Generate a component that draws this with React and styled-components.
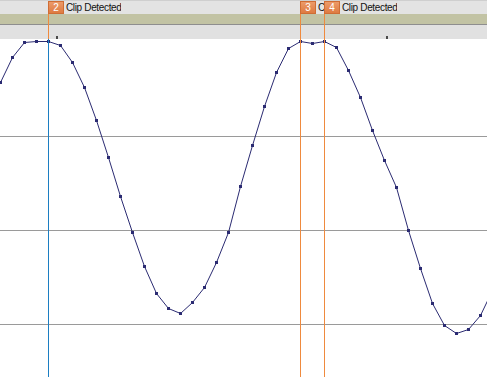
import React from "react";
import styled, { createGlobalStyle } from "styled-components";

const GlobalStyle = createGlobalStyle`
  html, body {
    margin: 0;
    padding: 0;
    background: #ffffff;
    overflow: hidden;
  }
  #root {
    height: 100vh;
  }
`;

const Frame = styled.div`
  position: relative;
  display: flex;
  flex-direction: column;
  width: 487px;
  height: 377px;
  overflow: hidden;
  font-family: "Liberation Sans", Arial, sans-serif;
`;

const LabelRow = styled.div`
  height: 14px;
  background: #e3e3e3;
  border-top: 1px solid #cfcfcf;
  box-sizing: border-box;
`;

const TanBand = styled.div`
  height: 10px;
  background: #c2c3a4;
  border-bottom: 1px solid #8e8e8e;
`;

const RulerRow = styled.div`
  position: relative;
  height: 14px;
  background: #e1e1e1;
`;

const Tick = styled.div`
  position: absolute;
  top: 11px;
  width: 2px;
  height: 3px;
  background: #4a4a4a;
`;

const Plot = styled.div`
  flex: 1;
  background: #ffffff;
`;

const Marker = styled.div`
  position: absolute;
  top: 1px;
  bottom: 0;
  width: 1px;
`;

const MarkerLine = styled.div`
  position: absolute;
  left: 0;
  top: 13px;
  width: 1px;
  height: 25px;
  background: #ef8a3e;
`;

const MarkerTail = styled.div`
  position: absolute;
  left: 0;
  top: 38px;
  bottom: 0;
  width: 1px;
  background: ${(p) => p.$color};
`;

const Badge = styled.div`
  position: absolute;
  left: 0;
  top: 0;
  display: flex;
  align-items: center;
  white-space: nowrap;
  background: #e3e3e3;
`;

const Num = styled.span`
  flex: none;
  display: inline-flex;
  align-items: center;
  justify-content: center;
  width: 16px;
  height: 13px;
  box-sizing: border-box;
  background: linear-gradient(#ec9a68, #de7b42);
  border: 1px solid #cf6d35;
  color: #ffffff;
  font-size: 10px;
  line-height: 1;
`;

const Caption = styled.span`
  display: block;
  overflow: hidden;
  padding-left: 2px;
  color: #111111;
  font-size: 10px;
  letter-spacing: -0.35px;
  line-height: 13px;
`;

const samples = [
  82, 57, 42, 41, 41, 45, 62, 87, 120, 157, 196, 232, 266, 293, 308, 313, 302,
  287, 262, 232, 186, 145, 106, 72, 48, 41, 43, 41, 47, 70, 97, 130, 160, 187,
  230, 268, 303, 325, 333, 329, 315, 290, 262,
];

const markers = [
  { id: 2, x: 48, tail: "#1c7ec2", label: "Clip Detected" },
  { id: 3, x: 300, tail: "#ef8a3e", label: "Clip Detected" },
  { id: 4, x: 324, tail: "#ef8a3e", label: "Clip Detected" },
];

function Waveform() {
  const pts = samples.map((y, i) => [i * 12, y]);
  const d = pts.map(([x, y], i) => `${i ? "L" : "M"}${x + 0.5} ${y + 0.5}`).join(" ");
  return (
    <svg width="487" height="338" viewBox="0 39 487 338" style={{ display: "block" }}>
      {[136, 230, 324].map((y) => (
        <line key={y} x1="0" x2="487" y1={y + 0.5} y2={y + 0.5} stroke="#9a9a9a" />
      ))}
      <path d={d} fill="none" stroke="#2b2b72" strokeWidth="1" />
      {pts.map(([x, y]) => (
        <rect key={x} x={x - 1} y={y - 1} width="3" height="3" fill="#2b2b72" />
      ))}
    </svg>
  );
}

export default function App() {
  return (
    <Frame>
      <GlobalStyle />
      <LabelRow />
      <TanBand />
      <RulerRow>
        <Tick style={{ left: 56 }} />
        <Tick style={{ left: 386 }} />
      </RulerRow>
      <Plot>
        <Waveform />
      </Plot>
      {markers.map((m, i) => {
        const next = markers[i + 1];
        // a label is cut off where the next marker's badge begins
        const room = next ? next.x - m.x - 16 : undefined;
        return (
          <Marker key={m.id} style={{ left: m.x }}>
            <MarkerLine />
            <MarkerTail $color={m.tail} />
            <Badge style={room ? { width: room + 16 } : undefined}>
              <Num>{m.id}</Num>
              <Caption>{m.label}</Caption>
            </Badge>
          </Marker>
        );
      })}
    </Frame>
  );
}
